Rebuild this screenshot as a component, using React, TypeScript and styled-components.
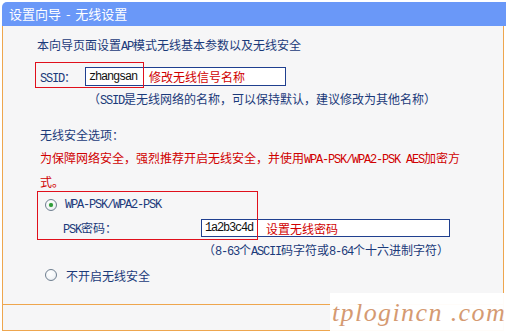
import React from "react";
import styled, { createGlobalStyle } from "styled-components";

const Global = createGlobalStyle`
  html, body { margin: 0; padding: 0; background: #ffffff; }
  body {
    font-family: "Noto Sans CJK SC", "Noto Sans", sans-serif;
    font-size: 12px;
    color: #1b3a7a;
  }
`;

const ORANGE = "#eea64e";
const NAVY = "#1b3a7a";
const RED = "#d00000";

const Frame = styled.div`
  position: relative;
  width: 504px;
  height: 332px;
  margin: 2px 0 0 2px;
`;

const Header = styled.div`
  height: 24px;
  background: #6a98f8;
  border-top-left-radius: 5px;
  color: #ffffff;
  font-size: 13px;
  line-height: 24px;
  padding-left: 7px;
  word-spacing: 2px;
  white-space: pre;
`;

const Panel = styled.div`
  width: 502px;
  box-sizing: border-box;
  border: 1px solid ${ORANGE};
  border-top: none;
  background: #f6f6f7;
`;

const Content = styled.div`
  height: 279px;
  box-sizing: border-box;
  padding-top: 11px;
  border-bottom: 1px solid ${ORANGE};
`;

const Footer = styled.div`
  height: 25px;
`;

const Line = styled.div<{ $pad: number; $top: number; $color?: string }>`
  height: 16px;
  line-height: 16px;
  margin-top: ${(p) => p.$top}px;
  padding-left: ${(p) => p.$pad}px;
  color: ${(p) => p.$color || NAVY};
  white-space: nowrap;
`;

const Warn = styled.div`
  margin-top: 4px;
  padding-left: 37px;
  line-height: 21px;
  color: ${RED};
  white-space: nowrap;
`;

const Lat = styled.span`
  font-family: "Liberation Mono", monospace;
  font-size: 12px;
  letter-spacing: -1.2px;
`;

const FieldRow = styled.div<{ $top: number; $pad: number; $h: number }>`
  position: relative;
  display: flex;
  align-items: center;
  height: ${(p) => p.$h}px;
  margin-top: ${(p) => p.$top}px;
  padding-left: ${(p) => p.$pad}px;
`;

const Label = styled.span<{ $w: number }>`
  width: ${(p) => p.$w}px;
  flex: none;
  white-space: nowrap;
`;

const Input = styled.div<{ $w: number; $h: number }>`
  width: ${(p) => p.$w}px;
  height: ${(p) => p.$h}px;
  box-sizing: border-box;
  border: 1px solid #1f3f8f;
  background: #ffffff;
  display: flex;
  align-items: center;
  padding-left: 3px;
  color: #000000;
  white-space: nowrap;
`;

const Value = styled.span`
  font-family: "Liberation Mono", monospace;
  font-size: 12px;
  letter-spacing: -1.2px;
  color: #111111;
`;

const Note = styled.span<{ $gap: number }>`
  margin-left: ${(p) => p.$gap}px;
  color: ${RED};
  font-size: 12px;
`;

const Mark = styled.div<{ $l: number; $t: number; $w: number; $h: number }>`
  position: absolute;
  left: ${(p) => p.$l}px;
  top: ${(p) => p.$t}px;
  width: ${(p) => p.$w}px;
  height: ${(p) => p.$h}px;
  box-sizing: border-box;
  border: 1px solid #e0101c;
  pointer-events: none;
  z-index: 2;
`;

const Group = styled.div`
  position: relative;
  margin-top: 5px;
  padding-left: 42px;
`;

const RadioRow = styled.div<{ $top: number; $pad: number; $gap: number }>`
  display: flex;
  align-items: center;
  height: 16px;
  margin-top: ${(p) => p.$top}px;
  padding-left: ${(p) => p.$pad}px;
  gap: ${(p) => p.$gap}px;
  white-space: nowrap;
`;

const Radio = styled.span<{ $on?: boolean }>`
  width: 12px;
  height: 12px;
  flex: none;
  box-sizing: border-box;
  border-radius: 50%;
  border: 1px solid #6f7f90;
  background: radial-gradient(circle at 40% 35%, #ffffff 0%, #f4f6f8 55%, #d8dde3 100%);
  display: flex;
  align-items: center;
  justify-content: center;
  &::after {
    content: "";
    width: 4px;
    height: 4px;
    border-radius: 50%;
    background: #2f9a3a;
    box-shadow: 0 0 1px #6ccb6c;
    display: ${(p) => (p.$on ? "block" : "none")};
  }
`;

const PskRow = styled.div`
  display: flex;
  align-items: center;
  height: 18px;
  margin-top: 6px;
  padding-left: 18px;
`;

const Watermark = styled.div`
  position: absolute;
  left: 328px;
  top: 291px;
  width: 178px;
  height: 41px;
  background: rgba(255, 255, 255, 0.97);
  font-family: "Liberation Serif", serif;
  font-style: italic;
  font-size: 26px;
  line-height: 40px;
  color: #d59a72;
  letter-spacing: 1.4px;
  white-space: pre;
  padding-left: 2px;
  box-sizing: border-box;
  overflow: hidden;
`;

export default function App() {
  return (
    <>
      <Global />
      <Frame>
        <Header>{"设置向导 - 无线设置"}</Header>
        <Panel>
          <Content>
            <Line $pad={34} $top={0}>
              本向导页面设置<Lat>AP</Lat>模式无线基本参数以及无线安全
            </Line>
            <FieldRow $top={14} $pad={37} $h={19}>
              <Label $w={45}>
                <Lat>SSID</Lat>：
              </Label>
              <Input $w={201} $h={19}>
                <Value>zhangsan</Value>
                <Note $gap={12}>修改无线信号名称</Note>
              </Input>
              <Mark $l={32} $t={-5} $w={109} $h={26} />
            </FieldRow>
            <Line $pad={85} $top={5}>
              （<Lat>SSID</Lat>是无线网络的名称，可以保持默认，建议修改为其他名称）
            </Line>
            <Line $pad={37} $top={20}>
              无线安全选项：
            </Line>
            <Warn>
              为保障网络安全，强烈推荐开启无线安全，并使用<Lat>WPA-PSK/WPA2-PSK AES</Lat>加密方
              <br />
              式。
            </Warn>
            <Group>
              <RadioRow $top={0} $pad={0} $gap={8}>
                <Radio $on />
                <Lat>WPA-PSK/WPA2-PSK</Lat>
              </RadioRow>
              <PskRow>
                <Label $w={138}>
                  <Lat>PSK</Lat>密码：
                </Label>
                <Input $w={249} $h={18}>
                  <Value>1a2b3c4d</Value>
                  <Note $gap={13}>设置无线密码</Note>
                </Input>
              </PskRow>
              <Mark $l={34} $t={-6} $w={221} $h={49} />
            </Group>
            <Line $pad={200} $top={5}>
              （<Lat>8-63</Lat>个<Lat>ASCII</Lat>码字符或<Lat>8-64</Lat>个十六进制字符）
            </Line>
            <RadioRow $top={9} $pad={42} $gap={9}>
              <Radio />
              不开启无线安全
            </RadioRow>
          </Content>
          <Footer />
        </Panel>
        <Watermark>{"tplogincn .com"}</Watermark>
      </Frame>
    </>
  );
}
